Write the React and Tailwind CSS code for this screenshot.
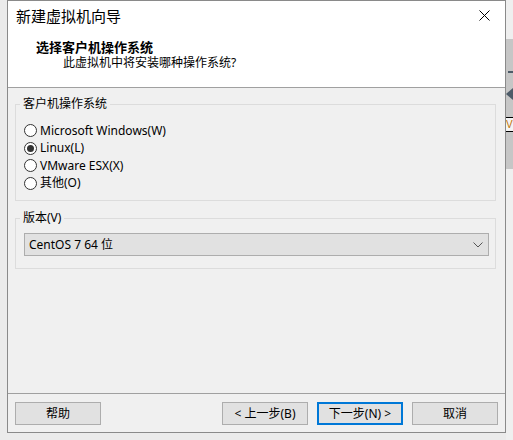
import React from "react";

const FONT = { fontFamily: '"Noto Sans", "Noto Sans CJK SC", sans-serif' };

function Radio({ checked, label }) {
  return (
    <div className="flex items-center h-[17.5px]">
      <span className="w-[13px] h-[13px] rounded-full border border-[#333333] bg-white flex items-center justify-center">
        {checked && <span className="w-[7px] h-[7px] rounded-full bg-[#333333]" />}
      </span>
      <span className="ml-[3px] text-[12px] leading-[16px] text-black">{label}</span>
    </div>
  );
}

function Button({ children, primary }) {
  return (
    <button
      className={
        "w-[86px] h-[23px] bg-[#e1e1e1] text-[12px] leading-[16px] text-black flex items-center justify-center " +
        (primary ? "border-2 border-[#0078d7]" : "border border-[#adadad]")
      }
    >
      {children}
    </button>
  );
}

export default function App() {
  return (
    <div className="w-[513px] h-[440px] bg-[#ebebeb] flex overflow-hidden" style={FONT}>
      <div className="w-[7px]" />
      <div className="w-[499px] h-[433px] border border-[#8a8a8a] bg-[#f0f0f0] flex flex-col">
        {/* header */}
        <div className="h-[87px] bg-white border-b border-[#a0a0a0] flex flex-col">
          <div className="h-[29px] flex items-center pl-[8px] pr-[10px]">
            <span className="text-[15px] leading-[20px] text-black">新建虚拟机向导</span>
            <div className="flex-1" />
            <svg width="11" height="11" viewBox="0 0 11 11" className="mr-[5px]">
              <path d="M0.5 0.5 L10.5 10.5 M10.5 0.5 L0.5 10.5" stroke="#000" strokeWidth="1" />
            </svg>
          </div>
          <div className="pl-[28px] mt-[9px] text-[13px] leading-[16px] font-bold text-black">选择客户机操作系统</div>
          <div className="pl-[55px] text-[12px] leading-[16px] text-black">此虚拟机中将安装哪种操作系统?</div>
        </div>
        {/* body */}
        <div className="flex-1 flex flex-col">
          <fieldset className="mt-[8px] ml-[7px] mr-[9px] border border-[#dcdcdc] pb-[8px]">
            <legend className="ml-[4px] px-[3px] text-[12px] leading-[16px] text-black">客户机操作系统</legend>
            <div className="pl-[8px] pt-[10px] flex flex-col">
              <Radio label="Microsoft Windows(W)" />
              <Radio checked label="Linux(L)" />
              <Radio label="VMware ESX(X)" />
              <Radio label="其他(O)" />
            </div>
          </fieldset>
          <fieldset className="mt-[9px] ml-[7px] mr-[9px] border border-[#dcdcdc] pb-[12px]">
            <legend className="ml-[4px] px-[3px] text-[12px] leading-[16px] text-black">版本(V)</legend>
            <div className="pl-[8px] pr-[6px] pt-[7px]">
              <div className="h-[23px] bg-[#e1e1e1] border border-[#adadad] flex items-center pl-[4px] pr-[5px]">
                <span className="text-[12px] leading-[16px] text-black">CentOS 7 64 位</span>
                <div className="flex-1" />
                <svg width="10" height="6" viewBox="0 0 10 6">
                  <path d="M0.5 0.5 L5 5 L9.5 0.5" fill="none" stroke="#555" strokeWidth="1" />
                </svg>
              </div>
            </div>
          </fieldset>
        </div>
        {/* footer */}
        <div className="h-[39px] border-t border-[#a0a0a0] flex items-start pt-[8px] px-[7px]">
          <Button>帮助</Button>
          <div className="flex-1" />
          <div className="flex gap-[9px]">
            <Button>&lt; 上一步(B)</Button>
            <Button primary>下一步(N) &gt;</Button>
            <Button>取消</Button>
          </div>
        </div>
      </div>
      {/* right strip of background window */}
      <div className="w-[7px] flex flex-col">
        <div className="h-[39px] bg-[#efefef]" />
        <div className="h-[130px] bg-[#c6c6c6] flex flex-col">
          <div className="mt-[32px] ml-[2px] h-[2px] bg-[#4d5b68]" />
          <div className="mt-[15px] w-0 h-0 border-y-[6px] border-y-transparent border-r-[7px] border-r-[#4d5b68]" />
          <div className="mt-[17px] h-[15px] border-y border-black bg-[#f4f4f4] overflow-hidden text-[10px] leading-[13px] text-[#1a5fb4]" style={{ fontFamily: '"Liberation Sans", sans-serif' }}>
            <span className="text-[#c07000]">V</span>L
          </div>
        </div>
        <div className="flex-1 bg-[#efefef]" />
      </div>
    </div>
  );
}
